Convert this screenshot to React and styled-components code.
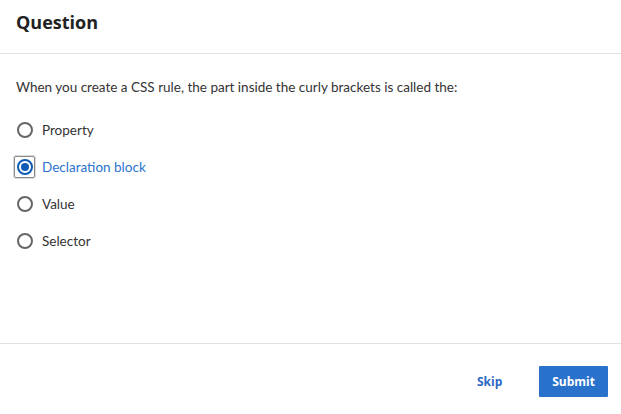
import React, { useState } from 'react';
import styled, { createGlobalStyle } from 'styled-components';

const GlobalStyle = createGlobalStyle`
  html, body {
    margin: 0;
    padding: 0;
    background: #ffffff;
  }
  body {
    font-family: Lato, "Noto Sans", sans-serif;
  }
`;

const Dialog = styled.div`
  width: 621px;
  height: 414px;
  display: flex;
  flex-direction: column;
  background: #ffffff;
  box-sizing: border-box;
`;

const Header = styled.div`
  height: 54px;
  box-sizing: border-box;
  padding: 10px 16px 0;
  border-bottom: 1px solid #e1e1e1;
`;

const Title = styled.h2`
  margin: 0;
  font-family: "Open Sans", sans-serif;
  font-weight: 700;
  font-size: 18px;
  line-height: 24px;
  color: #222222;
`;

const Body = styled.div`
  flex: 1;
  padding: 25px 16px 0;
`;

const Prompt = styled.p`
  margin: 0 0 24px;
  font-size: 13.5px;
  line-height: 16px;
  color: #333333;
`;

const Options = styled.div`
  display: flex;
  flex-direction: column;
  gap: 15px;
`;

const Option = styled.label`
  display: flex;
  align-items: center;
  gap: 7px;
  height: 22px;
  cursor: pointer;
  font-size: 13.5px;
  color: ${({ checked }) => (checked ? '#2b73cc' : '#333333')};
`;

const RadioFrame = styled.span`
  width: 21px;
  height: 22px;
  margin-left: -2px;
  display: flex;
  align-items: center;
  justify-content: center;
  box-sizing: border-box;
  border: 1px solid ${({ focused }) => (focused ? '#8a8a8a' : 'transparent')};
  border-radius: 2px;
  box-shadow: ${({ focused }) => (focused ? '0 0 0 1px #dadada' : 'none')};
`;

const HiddenRadio = styled.input.attrs({ type: 'radio' })`
  position: absolute;
  opacity: 0;
  width: 1px;
  height: 1px;
  margin: 0;
`;

const Circle = styled.span`
  width: 16px;
  height: 16px;
  box-sizing: border-box;
  border-radius: 50%;
  border: 2px solid ${({ checked }) => (checked ? '#0f5bb5' : '#666666')};
  display: flex;
  align-items: center;
  justify-content: center;

  &::after {
    content: '';
    width: 8px;
    height: 8px;
    border-radius: 50%;
    background: #0f5bb5;
    display: ${({ checked }) => (checked ? 'block' : 'none')};
  }
`;

const Footer = styled.div`
  height: 71px;
  box-sizing: border-box;
  border-top: 1px solid #e1e1e1;
  display: flex;
  align-items: flex-start;
  justify-content: flex-end;
  padding: 22px 13px 0 0;
  gap: 37px;
`;

const Button = styled.button`
  font-family: "Open Sans", sans-serif;
  font-weight: 700;
  font-size: 12px;
  height: 31px;
  border: none;
  border-radius: 1px;
  cursor: pointer;
  padding: ${({ primary }) => (primary ? '0 13px' : '0')};
  background: ${({ primary }) => (primary ? '#2872cc' : 'transparent')};
  color: ${({ primary }) => (primary ? '#ffffff' : '#2b68c4')};
`;

const answers = ['Property', 'Declaration block', 'Value', 'Selector'];

const App = () => {
  const [selected, setSelected] = useState('Declaration block');

  return (
    <>
      <GlobalStyle />
      <Dialog>
        <Header>
          <Title>Question</Title>
        </Header>
        <Body>
          <Prompt>
            When you create a CSS rule, the part inside the curly brackets is called the:
          </Prompt>
          <Options>
            {answers.map((name) => (
              <Option key={name} checked={selected === name}>
                <RadioFrame focused={selected === name}>
                  <HiddenRadio
                    name="answer"
                    checked={selected === name}
                    onChange={() => setSelected(name)}
                  />
                  <Circle checked={selected === name} />
                </RadioFrame>
                {name}
              </Option>
            ))}
          </Options>
        </Body>
        <Footer>
          <Button>Skip</Button>
          <Button primary>Submit</Button>
        </Footer>
      </Dialog>
    </>
  );
};

export default App;
